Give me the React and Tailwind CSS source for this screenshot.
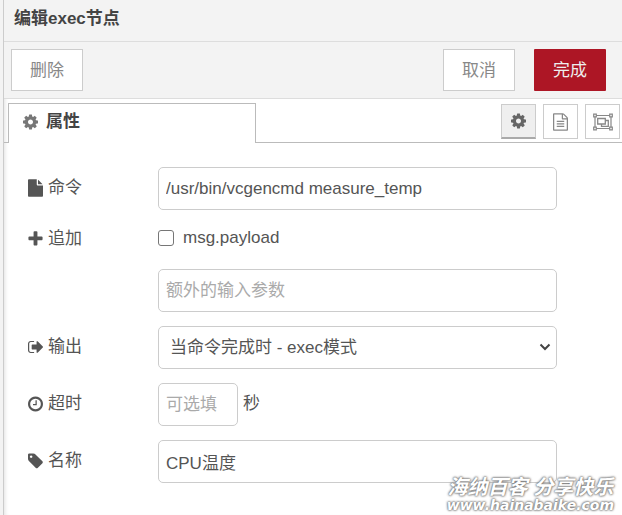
import { useState } from 'react';

const ICONS = {
  cog: {
    box: '128 0 1536 1792',
    d: 'M1152 896q0-106-75-181t-181-75-181 75-75 181 75 181 181 75 181-75 75-181zm512-109v222q0 12-8 23t-20 13l-185 28q-19 54-39 91 35 50 107 138 10 12 10 25t-9 23q-27 37-99 108t-94 71q-12 0-26-9l-138-108q-44 23-91 38-16 136-29 186-7 28-36 28h-222q-14 0-24.5-8.5t-11.5-21.5l-28-184q-49-16-90-37l-141 107q-10 9-25 9-14 0-25-11-126-114-165-168-7-10-7-23 0-12 8-23 15-21 51-66.5t54-70.5q-27-50-41-99l-183-27q-13-2-21-12.5t-8-23.5v-222q0-12 8-23t19-13l186-28q14-46 39-92-40-57-107-138-10-12-10-24 0-10 9-23 26-36 98.5-107.5t94.5-71.5q13 0 26 10l138 107q44-23 91-38 16-136 29-186 7-28 36-28h222q14 0 24.5 8.5t11.5 21.5l28 184q49 16 90 37l142-107q9-9 24-9 13 0 25 10 129 119 165 170 7 8 7 22 0 12-8 23-15 21-51 66.5t-54 70.5q26 50 41 98l183 28q13 2 21 12.5t8 23.5z',
  },
  file: {
    box: '128 0 1536 1792',
    d: 'M1152 512v-472q22 14 36 28l408 408q14 14 28 36h-472zm-128 32q0 40 28 68t68 28h544v1056q0 40-28 68t-68 28h-1344q-40 0-68-28t-28-68v-1600q0-40 28-68t68-28h800v544z',
  },
  fileText: {
    box: '128 0 1536 1792',
    d: 'M1596 380q28 28 48 76t20 88v1152q0 40-28 68t-68 28h-1344q-40 0-68-28t-28-68v-1600q0-40 28-68t68-28h896q40 0 88 20t76 48zm-444-244v376h376q-10-29-22-41l-313-313q-12-12-41-22zm384 1528v-1024h-416q-40 0-68-28t-28-68v-416h-768v1536h1280zm-1024-864q0-14 9-23t23-9h704q14 0 23 9t9 23v64q0 14-9 23t-23 9h-704q-14 0-23-9t-9-23v-64zm736 224q14 0 23 9t9 23v64q0 14-9 23t-23 9h-704q-14 0-23-9t-9-23v-64q0-14 9-23t23-9h704zm0 256q14 0 23 9t9 23v64q0 14-9 23t-23 9h-704q-14 0-23-9t-9-23v-64q0-14 9-23t23-9h704z',
  },
  plus: {
    box: '192 0 1408 1792',
    d: 'M1600 736v192q0 40-28 68t-68 28h-416v416q0 40-28 68t-68 28h-192q-40 0-68-28t-28-68v-416h-416q-40 0-68-28t-28-68v-192q0-40 28-68t68-28h416v-416q0-40 28-68t68-28h192q40 0 68 28t28 68v416h416q40 0 68 28t28 68z',
  },
  signOut: {
    box: '64 0 1568 1792',
    d: 'M704 1440q0 4 1 20t.5 26.5-3 23.5-10 19.5-20.5 6.5h-320q-119 0-203.5-84.5t-84.5-203.5v-704q0-119 84.5-203.5t203.5-84.5h320q13 0 22.5 9.5t9.5 22.5q0 4 1 20t.5 26.5-3 23.5-10 19.5-20.5 6.5h-320q-66 0-113 47t-47 113v704q0 66 47 113t113 47h312l11.5 1 11.5 3 8 5.5 7 9 2 13.5zm928-544q0 26-19 45l-544 544q-19 19-45 19t-45-19-19-45v-288h-448q-26 0-45-19t-19-45v-384q0-26 19-45t45-19h448v-288q0-26 19-45t45-19 45 19l544 544q19 19 19 45z',
  },
  clock: {
    box: '128 0 1536 1792',
    d: 'M1024 544v448q0 14-9 23t-23 9h-320q-14 0-23-9t-9-23v-64q0-14 9-23t23-9h224v-352q0-14 9-23t23-9h64q14 0 23 9t9 23zm416 352q0-148-73-273t-198-198-273-73-273 73-198 198-73 273 73 273 198 198 273 73 273-73 198-198 73-273zm224 0q0 209-103 385.5t-279.5 279.5-385.5 103-385.5-103-279.5-279.5-103-385.5 103-385.5 279.5-279.5 385.5-103 385.5 103 279.5 279.5 103 385.5z',
  },
  tag: {
    box: '128 0 1536 1792',
    d: 'M576 448q0-53-37.5-90.5t-90.5-37.5-90.5 37.5-37.5 90.5 37.5 90.5 90.5 37.5 90.5-37.5 37.5-90.5zm1067 576q0 53-37 90l-491 492q-39 37-91 37-53 0-90-37l-715-716q-38-37-64.5-101t-26.5-117v-416q0-52 38-90t90-38h416q53 0 117 26.5t102 64.5l715 714q37 39 37 91z',
  },
};

const Icon = ({ name, className }) => (
  <svg viewBox={ICONS[name].box} fill="currentColor" aria-hidden="true" className={`h-[18px] w-[15px] shrink-0 ${className || ''}`}>
    <path d={ICONS[name].d} />
  </svg>
);

const ObjectGroup = () => (
  <svg viewBox="0 0 20 18" fill="none" stroke="currentColor" aria-hidden="true" className="h-[18px] w-5">
    <path d="M2 2.500h16M2 15.500h16M2 2.500v13M18 2.500v13" strokeWidth="1.2" />
    <path d="M.7 1.200h2.600v2.600H.7zM16.700 1.200h2.600v2.600h-2.600zM.7 14.200h2.600v2.600H.7zM16.700 14.200h2.600v2.600h-2.600z" fill="#fff" strokeWidth="1.2" />
    <path d="M4.700 5.500h7.600v5.500H4.700zM12.300 7.500h3v5.800H8.500V11" strokeWidth="1.3" />
  </svg>
);

const inputClass =
  'h-[43px] rounded-[5px] border border-[#ccc] bg-white px-[7px] text-[#555] placeholder:text-[#aaa] focus:outline-none';
const buttonClass = 'h-[42px] w-[72px] border border-[#ccc] bg-white pt-[2px] text-[#888]';
const tabButtonClass = 'flex h-[35px] w-[35px] items-center justify-center border border-[#ccc]';

const Row = ({ icon, label, htmlFor, children }) => (
  <div className="flex items-center">
    <label htmlFor={htmlFor} className="flex w-[130px] shrink-0 items-center gap-[5px] pb-[2px]">
      {icon && <Icon name={icon} />}
      {label}
    </label>
    {children}
  </div>
);

const App = () => {
  const [command, setCommand] = useState('/usr/bin/vcgencmd measure_temp');
  const [append, setAppend] = useState(false);
  const [name, setName] = useState('CPU温度');

  return (
    <div className="relative flex min-h-screen bg-white font-['Liberation_Sans','Noto_Sans_CJK_SC',sans-serif] text-[17px] leading-6 text-[#555]">
      <div className="w-1 shrink-0 border-r border-[#ccc] bg-[#f3f3f3]" />

      <div className="min-w-0 flex-1 shadow-[inset_4px_0_4px_-3px_rgba(0,0,0,0.12)]">
        <div className="border-b border-[#ddd] bg-[#f3f3f3] px-[10px] pt-[7px] pb-[10px]">
          <h1 className="font-bold text-[#444]">编辑exec节点</h1>
        </div>

        <div className="flex items-center border-b border-[#ddd] bg-[#f3f3f3] py-[7px] pr-4 pl-[7px]">
          <button type="button" className={buttonClass}>删除</button>
          <button type="button" className={`${buttonClass} ml-auto`}>取消</button>
          <button type="button" className="ml-[19px] h-[42px] w-[72px] rounded-[1px] bg-[#ad1625] pt-[2px] text-[#eee]">完成</button>
        </div>

        <div className="flex items-start border-b border-[#bbb] pt-1 pr-[2px] pl-1">
          <div className="-mb-px flex h-10 w-[248px] items-center gap-2 border border-b-0 border-[#bbb] bg-white px-[14px] pb-[3px] font-bold text-[#444]">
            <Icon name="cog" className="text-[#777]" />
            属性
          </div>
          <div className="ml-auto flex gap-[7px] pt-px">
            <button type="button" aria-label="属性" className={`${tabButtonClass} border-b-2 border-b-[#aaa] bg-[#efefef] text-[#666]`}>
              <Icon name="cog" />
            </button>
            <button type="button" aria-label="描述" className={`${tabButtonClass} bg-white text-[#888]`}>
              <Icon name="fileText" />
            </button>
            <button type="button" aria-label="外观" className={`${tabButtonClass} bg-white text-[#888]`}>
              <ObjectGroup />
            </button>
          </div>
        </div>

        <form className="flex flex-col gap-[14px] pt-6 pr-[65px] pb-8 pl-6">
          <Row icon="file" label="命令" htmlFor="command">
            <input id="command" type="text" value={command} onChange={(e) => setCommand(e.target.value)} className={`${inputClass} min-w-0 flex-1`} />
          </Row>
          <Row icon="plus" label="追加" htmlFor="append-value">
            <label className="flex h-[31px] items-center gap-[9px] pb-1">
              <input
                type="checkbox"
                checked={append}
                onChange={(e) => setAppend(e.target.checked)}
                className="h-4 w-4 appearance-none rounded-[3px] border border-[#767676] bg-white checked:bg-[#555]"
              />
              msg.payload
            </label>
          </Row>
          <Row>
            <input id="append-value" type="text" placeholder="额外的输入参数" className={`${inputClass} min-w-0 flex-1`} />
          </Row>
          <Row icon="signOut" label="输出" htmlFor="output">
            <div className="relative min-w-0 flex-1">
              <select id="output" className={`${inputClass} block w-full appearance-none pl-[11px]`}>
                <option>当命令完成时 - exec模式</option>
                <option>当命令进行时 - spawn模式</option>
              </select>
              <svg viewBox="0 0 12 8" fill="none" stroke="#444" strokeWidth="2" aria-hidden="true" className="pointer-events-none absolute top-[17px] right-[6px] h-2 w-3">
                <path d="M1.500 1.500 6 6l4.500-4.500" />
              </svg>
            </div>
          </Row>
          <Row icon="clock" label="超时" htmlFor="timeout">
            <input id="timeout" type="text" placeholder="可选填" className={`${inputClass} w-20`} />
            <span className="ml-[5px] pb-[2px]">秒</span>
          </Row>
          <Row icon="tag" label="名称" htmlFor="name">
            <input id="name" type="text" value={name} onChange={(e) => setName(e.target.value)} className={`${inputClass} min-w-0 flex-1`} />
          </Row>
        </form>
      </div>

      <div className="pointer-events-none absolute right-2 bottom-1 text-center font-bold text-white italic [text-shadow:0_0_2px_#777,0_0_2px_#777,0_0_3px_#888]">
        <p className="text-[20px] leading-6">海纳百客 分享快乐</p>
        <p className="font-['DejaVu_Sans',sans-serif] text-[14px] leading-3">www.hainabaike.com</p>
      </div>
    </div>
  );
};

export default App;
